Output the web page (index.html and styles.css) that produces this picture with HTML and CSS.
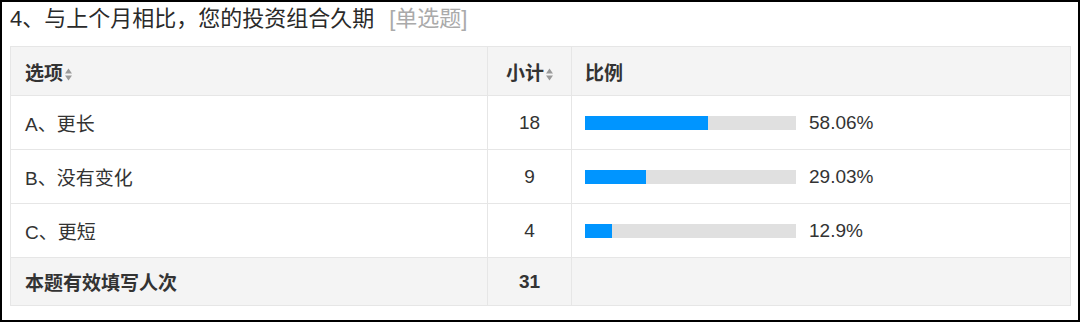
FILE: index.html
```html
<!DOCTYPE html>
<html lang="zh">
<head>
<meta charset="utf-8">
<title>投资组合久期</title>
<link rel="stylesheet" href="styles.css">
</head>
<body>
<div class="frame">
  <div class="title">4、与上个月相比，您的投资组合久期<span class="qtype">[单选题]</span></div>
  <table class="stats">
    <colgroup>
      <col class="c-opt">
      <col class="c-cnt">
      <col class="c-pct">
    </colgroup>
    <thead>
      <tr>
        <th class="opt">选项<svg class="sort" width="7" height="13" viewBox="0 0 7 13"><path d="M3.5 0.5 L7 5.5 L0 5.5 Z" fill="#9a9a9a"/><path d="M0 7.5 L7 7.5 L3.5 12.5 Z" fill="#9a9a9a"/></svg></th>
        <th class="cnt">小计<svg class="sort" width="7" height="13" viewBox="0 0 7 13"><path d="M3.5 0.5 L7 5.5 L0 5.5 Z" fill="#9a9a9a"/><path d="M0 7.5 L7 7.5 L3.5 12.5 Z" fill="#9a9a9a"/></svg></th>
        <th class="pct">比例</th>
      </tr>
    </thead>
    <tbody>
      <tr>
        <td class="opt">A、更长</td>
        <td class="cnt">18</td>
        <td class="pct"><div class="bar-wrap"><div class="bar"><div class="fill" style="width:58.06%"></div></div><span class="pv">58.06%</span></div></td>
      </tr>
      <tr>
        <td class="opt">B、没有变化</td>
        <td class="cnt">9</td>
        <td class="pct"><div class="bar-wrap"><div class="bar"><div class="fill" style="width:29.03%"></div></div><span class="pv">29.03%</span></div></td>
      </tr>
      <tr>
        <td class="opt">C、更短</td>
        <td class="cnt">4</td>
        <td class="pct"><div class="bar-wrap"><div class="bar"><div class="fill" style="width:12.9%"></div></div><span class="pv">12.9%</span></div></td>
      </tr>
    </tbody>
    <tfoot>
      <tr>
        <td class="opt">本题有效填写人次</td>
        <td class="cnt">31</td>
        <td class="pct"></td>
      </tr>
    </tfoot>
  </table>
</div>
</body>
</html>
```

FILE: styles.css
```css
html, body {
  margin: 0;
  padding: 0;
  background: #fff;
}

.frame {
  box-sizing: border-box;
  width: 1080px;
  height: 322px;
  border: 2px solid #000;
  padding: 0 8px;
  font-family: "Liberation Sans", "Noto Sans CJK SC", sans-serif;
  color: #333;
}

.title {
  font-size: 22px;
  line-height: 34px;
  height: 34px;
  margin-bottom: 10px;
  color: #2a2a2a;
  white-space: nowrap;
}

.qtype {
  color: #aaa;
  margin-left: 15px;
}

.stats {
  width: 1060px;
  border-collapse: collapse;
  table-layout: fixed;
  font-size: 19px;
  border: 1px solid #e6e6e6;
}

.c-opt { width: 477px; }
.c-cnt { width: 84px; }
.c-pct { width: 499px; }

.stats th,
.stats td {
  border: 1px solid #e6e6e6;
  padding: 0 13px;
  vertical-align: middle;
  text-align: left;
}

.stats thead th,
.stats tfoot td {
  background: #f4f4f4;
  font-weight: bold;
  height: 48px;
}

.stats tfoot td {
  height: 47px;
}

.stats tbody td {
  height: 53px;
  background: #fff;
}

.stats .cnt {
  text-align: center;
  padding: 0;
}

.stats .opt {
  padding-left: 14px;
}

.sort {
  display: inline-block;
  vertical-align: -1px;
  margin-left: 2px;
}

.bar-wrap {
  display: flex;
  align-items: center;
  gap: 13px;
}

.bar {
  width: 211px;
  height: 14px;
  background: #e0e0e0;
  flex: none;
}

.fill {
  height: 100%;
  background: #0095ff;
}

.pv {
  white-space: nowrap;
}
```
